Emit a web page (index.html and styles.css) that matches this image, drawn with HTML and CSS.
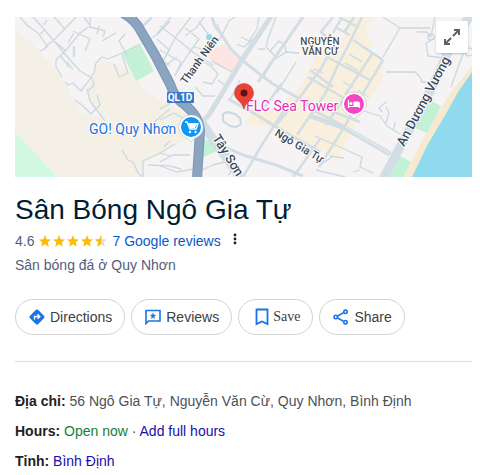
FILE: index.html
```html
<!DOCTYPE html>
<html lang="vi">
<head>
  <meta charset="UTF-8">
  <title>Sân Bóng Ngô Gia Tự</title>
  <meta name="viewport" content="width=device-width, initial-scale=1.0">
  <link rel="stylesheet" href="styles.css">
</head>
<body>
  <main class="panel">
    <div class="map">
      <svg class="map-canvas" viewBox="0 0 457 160" preserveAspectRatio="xMidYMid slice" role="img" aria-label="Map">
        <rect width="457" height="160" fill="#f5f3f3"/>

        <!-- land -->
        <path d="M0 13 15 25 37 48 50 67 60 85 65 95 89 103 78 90 72 78 72 72 77 62 80 52 84 45 90 43 108 50 122 60 128 73 152 87 165 93 182 107 170 124 152 130 148 136 132 143 127 160H42L0 115Z" fill="#f4f0e5"/>
        <path d="M53 75 65 92 77 99 90 103 78 88 72 75Z" fill="#f5f3f3"/>
        <path d="M0 115 42 160H0Z" fill="#d3f8e2"/>
        <path d="M107 36 125 27 139 54 121 64Z" fill="#c3f1d5"/>
        <path d="M188 122 198 126 202 134 187 141Z" fill="#c3f1d5"/>
        <path d="M192 36 209 27 226 43 218 56 198 47Z" fill="#fce5e3"/>
        <path d="M334 0H358L350 14 358 27 352 32 368 43 367 62 350 90 345 98 335 118 322 143 304 132 289 128 260 110 230 107 236 97 265 90 280 76 289 64 298 44 305 30 320 40 330 15Z" fill="#f8f0dc"/>
        <circle cx="194" cy="20" r="3" fill="#8ddcee"/>

        <!-- coast -->
        <path d="M457 49 436 75 417 105 403 132 388 160H457Z" fill="#f6e9cf"/>
        <path d="M457 55 443 75 432 95 413 127 397 160H457Z" fill="#90daee"/>
        <path d="M415 83 426 89 412 116 400 111Z" fill="#c3f1d5"/>
        <path d="M385 139 396 145 388 160H374Z" fill="#c3f1d5"/>

        <!-- lanes -->
        <g fill="none" stroke="#cbd8e1" stroke-width="1.3" stroke-linejoin="round">
          <path d="M5 0 13 9 23 16 30 26 33 29 29 32 25 34M18 0 28 11 40 25 49 36 65 54 77 61 79 68 73 74M31 12 25 17M29 8 32 3M39 0 50 12M61 0 40 22 30 30M40 25 50 33M75 0 75 9 65 16 51 33 41 43 41 50 47 60M45 38 54 50M52 44 58 53"/>
          <path d="M58 14 75 22 70 34M59 16 53 26M75 10 90 14 88 20M69 0 75 8M84 9 82 17M87 24 101 16M110 17 104 24 112 38M107 36 125 27M107 36 93 42 87 40 81 46 79 56 72 66 66 74 58 66 53 68 50 65M99 47 104 60 113 56 107 38M127 27 143 17 155 4M142 22 154 33M155 32 147 46"/>
          <path d="M60 83 67 88 76 97 85 88 82 78M72 72 75 84 84 96 90 104M138 106 155 92M107 133 113 143 118 145 123 156 128 160V144L145 136 160 127M145 136 155 139M133 148 155 149 166 152M149 130 155 124"/>
          <path d="M145 9 162 22 179 36 198 48M156 0 142 17M176 0 162 18 148 44 155 49M170 11 184 22 174 36 160 58M184 5 193 17M189 0 182 10 170 19M145 33 166 45 160 59M151 48 162 40M178 29 189 33 195 31 205 22 214 4 220 0M202 7 207 20M222 27 229 30 238 22M188 65 197 67 203 57 196 49 184 43M180 70 188 79 200 79M197 44 219 56M203 63 211 69 205 80M225 63 215 83"/>
          <path d="M145 92 154 87 158 79M145 103 159 96 168 101M145 145 158 138 175 138M145 149 162 155 178 152M187 153 198 148 210 145M213 158 222 149M244 0 242 12 234 24M261 0 253 22 251 30 262 41 271 35 270 28 264 24 255 34M270 35 284 36M281 45 262 76M255 45 249 60M250 32 243 32M234 24 226 20"/>
          <path d="M368 0 385 11 368 40M385 11H415M402 15H412L415 20M420 21 411 26 413 39 428 41M371 55H400L405 60 407 65H416M420 0 417 14 416 20M441 19 450 31 436 70M450 0 439 18M346 93 365 99 372 109 385 117M367 95 364 91 371 85M371 106 374 96 371 90M379 112 380 105M300 119 347 140 345 150 358 156M338 155 345 153M315 139 329 141M301 153 330 160M317 140 305 148"/>
          <path d="M208 97 213 95 220 97 225 101 226 107 221 110 215 109 208 104Z" stroke-width="2"/>
          <circle cx="416" cy="20" r="3"/>
          <circle cx="454" cy="35" r="4"/>
        </g>

        <!-- town grid -->
        <g fill="none" stroke="#d3dde4" stroke-width="2.5" stroke-linejoin="round">
          <path d="M197 0 200 9 207 18 215 31 227 43 242 55 258 67 285 82 300 94 330 110" stroke-width="3"/>
          <path d="M288 0 243 65M213 82 235 94 258 108 305 135M203 127 228 138 261 148 288 159" stroke-width="3"/>
          <path d="M270 92 248 126 228 160M305 122 289 145 278 160M347 0 335 25 322 50 310 77 292 103 282 118M339 0 330 14M368 43 343 85 330 109 304 150M338 23 368 43M357 37 330 78M312 40 307 50 285 80 262 107M312 40 355 63M295 53 318 70M293 60 332 83M267 66 250 90M318 0 306 15 314 22M324 0 341 9M320 10 335 18M326 2 318 16M285 82 345 105M329 81 311 108"/>
          <path d="M334 37 347 45M330 46 343 54M299 52 308 56M328 65 338 70M343 73 353 80" stroke-width="1.5"/>
          <path d="M295 99 330 111 375 137" stroke-width="5"/>
          <path d="M59 29V40M137 0 127 10"/>
        </g>
        <path d="M331 110 374 136" stroke="#f0f3f5" stroke-width="1"/>

        <!-- avenues -->
        <g fill="none" stroke="#d3dde4" stroke-linejoin="round">
          <path d="M257-2 227 43 203 83 194 98 183 108" stroke-width="5"/>
          <path d="M186 104 195 118 211 140 226 162" stroke-width="9"/>
          <path d="M455-2 433 35 416 73 385 130 367 164" stroke-width="9"/>
        </g>
        <path d="M108-4Q121 3 127 16L140 38 155 67Q160 82 170 88 184 99 185 114L182 162" fill="none" stroke="#7896b6" stroke-width="10"/>
        <path d="M108-4Q121 3 127 16L140 38 155 67Q160 82 170 88 184 99 185 114L182 162" fill="none" stroke="#8ba5c1" stroke-width="8"/>

        <!-- labels -->
        <rect x="152" y="75" width="27" height="11" rx="1" fill="#3c78c8"/>
        <text class="map-text shield" x="165" y="84">QL1D</text>
        <text class="map-text street small" transform="translate(171 68) rotate(-54)">Thanh Niên</text>
        <text class="map-text district" x="305" y="28">NGUYỄN</text>
        <text class="map-text district" x="305" y="38">VĂN CỪ</text>
        <text class="map-text street large" transform="translate(389 130) rotate(-62)">An Dương Vương</text>
        <text class="map-text street large" transform="translate(197 121) rotate(58)">Tây Sơn</text>
        <text class="map-text street small" transform="translate(259 118) rotate(31)">Ngô Gia Tự</text>
        <text class="map-text shop" x="74" y="117">GO! Quy Nhơn</text>
        <text class="map-text hotel" x="231" y="94">FLC Sea Tower</text>

        <!-- cart pin -->
        <path d="M176 98a12 12 0 0 1 8 21q-5 2-8 6-3-4-8-6a12 12 0 0 1 8-21Z" fill="#fff" stroke="#b9c0c6" stroke-width=".6"/>
        <circle cx="176" cy="110" r="10" fill="#0d96f5"/>
        <path d="M170 105h2l3 7h6l2-5h-10" fill="none" stroke="#fff" stroke-width="1.4"/>
        <path d="M173.500 106.500H182l-2 4.500h-5Z" fill="#fff"/>
        <circle cx="175" cy="115" r="1.200" fill="#fff"/>
        <circle cx="180.500" cy="115" r="1.200" fill="#fff"/>

        <!-- hotel pin -->
        <path d="M339 75a12 12 0 0 1 8 21q-5 2-8 6-3-4-8-6a12 12 0 0 1 8-21Z" fill="#fff" stroke="#b9c0c6" stroke-width=".6"/>
        <circle cx="339" cy="87" r="10" fill="#f745c4"/>
        <path d="M333.500 83v8M333 89.500h12M344.500 91v-4" fill="none" stroke="#fff" stroke-width="1.200"/>
        <path d="M338.500 84.500h4.500a2 2 0 0 1 2 2v2.500h-6.500Z" fill="#fff"/>
        <circle cx="336" cy="86.500" r="1.500" fill="#fff"/>

        <!-- place pin -->
        <path d="M229 66.500a9.500 9.500 0 0 1 9.500 9.500c0 7-7.500 8-9.500 16-2-8-9.500-9-9.500-16a9.500 9.500 0 0 1 9.500-9.500Z" fill="#ea4335" stroke="#c5382d" stroke-width=".6"/>
        <circle cx="229" cy="76" r="3.500" fill="#5c1510"/>
      </svg>
      <button class="expand" type="button" aria-label="Expand map">
        <svg width="18" height="18" viewBox="0 0 18 18" fill="none" stroke="#5f6062" stroke-width="2">
          <path d="M11 2h5v5M16 2l-6 6M7 16H2v-5M2 16l6-6"/>
        </svg>
      </button>
    </div>

    <h1>Sân Bóng Ngô Gia Tự</h1>
    <div class="rating">
      <span>4.6</span>
      <svg class="stars" width="68" height="12" viewBox="0 0 68 12" role="img" aria-label="4.6 / 5">
        <defs>
          <path id="star" d="M6 0 7.700 4.200 12 4.500 8.700 7.300 9.800 11.700 6 9.300 2.200 11.700 3.300 7.300 0 4.500 4.300 4.200Z"/>
          <clipPath id="half"><rect width="6" height="12"/></clipPath>
        </defs>
        <g fill="#fbbc04">
          <use href="#star"/>
          <use href="#star" x="14"/>
          <use href="#star" x="28"/>
          <use href="#star" x="42"/>
        </g>
        <g transform="translate(56 0)">
          <use href="#star" fill="#dadce0"/>
          <use href="#star" fill="#fbbc04" clip-path="url(#half)"/>
        </g>
      </svg>
      <a class="reviews-link" href="#">7 Google reviews</a>
      <button class="more" type="button" aria-label="More">
        <svg width="4" height="12" viewBox="0 0 4 12" fill="#202124">
          <circle cx="2" cy="2" r="1.400"/><circle cx="2" cy="6" r="1.400"/><circle cx="2" cy="10" r="1.400"/>
        </svg>
      </button>
    </div>
    <p class="category">Sân bóng đá ở Quy Nhơn</p>

    <div class="actions">
      <button class="chip" type="button">
        <svg width="16" height="16" viewBox="0 0 16 16">
          <path d="M7 .800Q8 0 9 .800L15.200 7Q16 8 15.200 9L9 15.200Q8 16 7 15.200L.800 9Q0 8 .800 7Z" fill="#1a73e8"/>
          <path d="M5.500 10.500V7.500H10M8.500 5.200 10.800 7.500 8.500 9.800" fill="none" stroke="#fff" stroke-width="1.400"/>
        </svg>
        Directions
      </button>
      <button class="chip" type="button">
        <svg width="16" height="16" viewBox="0 0 16 16">
          <path d="M1 14.500V1.500H15V12H3.500Z" fill="none" stroke="#1a73e8" stroke-width="1.600"/>
          <path d="M8 3.500 8.900 5.800 11.200 6 9.400 7.500 10 9.900 8 8.600 6 9.900 6.600 7.500 4.800 6 7.100 5.800Z" fill="#1a73e8"/>
        </svg>
        Reviews
      </button>
      <button class="chip chip-save" type="button">
        <svg width="14" height="18" viewBox="0 0 14 18">
          <path d="M1.500 1.500H12.500V16L7 13.500 1.500 16Z" fill="none" stroke="#1a73e8" stroke-width="1.800"/>
        </svg>
        Save
      </button>
      <button class="chip" type="button">
        <svg width="16" height="16" viewBox="0 0 16 16" fill="none" stroke="#1a73e8" stroke-width="1.600">
          <path d="M4.200 7.200 11 3.400M4.200 8.800 11 12.600"/>
          <circle cx="2.800" cy="8" r="1.700"/><circle cx="12.500" cy="2.800" r="1.700"/><circle cx="12.500" cy="13.200" r="1.700"/>
        </svg>
        Share
      </button>
    </div>

    <div class="facts">
      <p><b>Địa chỉ:</b> 56 Ngô Gia Tự, Nguyễn Văn Cừ, Quy Nhơn, Bình Định</p>
      <p><b>Hours:</b> <span class="open">Open now</span> · <a href="#">Add full hours</a></p>
      <p><b>Tỉnh:</b> <a href="#">Bình Định</a></p>
    </div>
  </main>
</body>
</html>
```
FILE: styles.css
```css
body {
  margin: 0;
  background-color: #fff;
  color: #4d5156;
  font-family: "Liberation Sans", Arial, sans-serif;
  font-size: 14px;
  line-height: 20px;
}

.panel {
  padding: 17px 8px 0 15px;
}

a {
  color: #1a0dab;
  text-decoration: none;
}

button {
  cursor: pointer;
}

/* map */
.map {
  position: relative;
  height: 160px;
  overflow: hidden;
}

.map-canvas {
  display: block;
  width: 100%;
  height: 100%;
}

.expand {
  position: absolute;
  top: 4px;
  right: 4px;
  display: grid;
  place-items: center;
  width: 32px;
  height: 32px;
  padding: 0;
  border: 0;
  border-radius: 2px;
  background-color: #fff;
  box-shadow: 0 1px 2px rgba(0, 0, 0, 0.2);
}

.map-text {
  font-family: Roboto, sans-serif;
  font-size: 14px;
  font-weight: 400;
  paint-order: stroke;
  stroke: #fff;
  stroke-width: 2px;
  stroke-linejoin: round;
}

.street {
  font-weight: 500;
  fill: #3c4a5c;
}

.small {
  font-size: 11px;
}

.large {
  font-size: 13px;
}

.district {
  font-size: 10px;
  font-weight: 500;
  fill: #4a4f55;
  text-anchor: middle;
}

.shield {
  font-size: 10px;
  font-weight: 700;
  fill: #fff;
  stroke: none;
  text-anchor: middle;
}

.shop {
  fill: #1c74e0;
}

.hotel {
  fill: #e62cb4;
}

/* header */
h1 {
  margin: 15px 0 0;
  color: #001d35;
  font-size: 28px;
  font-weight: 400;
  line-height: 36px;
}

.rating {
  display: flex;
  align-items: center;
  margin-top: 3px;
  color: #545d7e;
}

.stars {
  margin: 0 5px;
}

.reviews-link {
  color: #0b57d0;
}

.more {
  display: flex;
  margin: 0 0 4px 12px;
  padding: 0;
  border: 0;
  background: none;
}

.category {
  margin: 4px 0 0;
  color: #545d7e;
}

/* action buttons */
.actions {
  display: flex;
  flex-wrap: wrap;
  gap: 6px;
  padding: 24px 0 26px;
  border-bottom: 1px solid #dadce0;
}

.chip {
  display: flex;
  align-items: center;
  gap: 5px;
  height: 36px;
  padding: 0 12px 0 13px;
  border: 1px solid #d2d2d2;
  border-radius: 18px;
  background-color: #fff;
  color: #3c4043;
  font-family: inherit;
  font-size: 14px;
}

.chip-save {
  gap: 4px;
  padding-left: 16px;
  font-family: "Liberation Serif", "Times New Roman", serif;
}

/* facts */
.facts {
  padding-top: 29px;
}

.facts p {
  margin: 0 0 10px;
}

.facts p:last-child {
  margin-bottom: 0;
}

.facts b {
  color: #202124;
}

.open {
  color: #188038;
}
```
